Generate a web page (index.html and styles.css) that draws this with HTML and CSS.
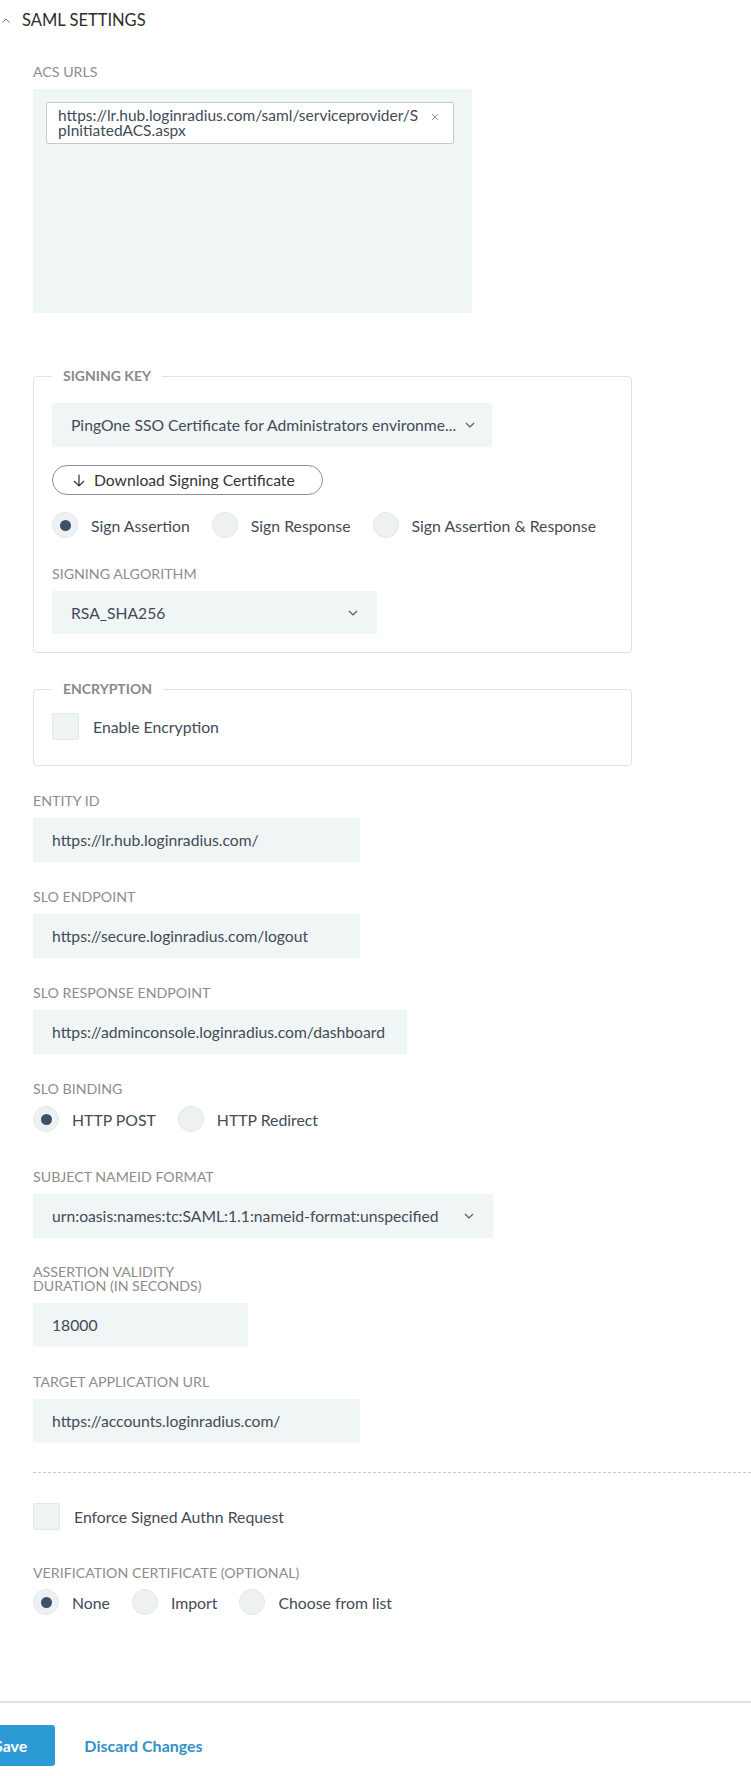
FILE: index.html
```html
<!DOCTYPE html>
<html lang="en">
<head>
    <meta charset="UTF-8">
    <meta name="viewport" content="width=device-width, initial-scale=1.0">
    <title>SAML Settings</title>
    <link rel="stylesheet" href="styles.css">
</head>
<body>

<div class="saml-panel">
    <div class="panel-head">
        <svg class="caret" width="8" height="5" viewBox="0 0 8 5"><path d="M0.5 4.5 L4 1 L7.5 4.5" fill="none" stroke="#777" stroke-width="1"/></svg>
        <span>SAML SETTINGS</span>
    </div>

    <div class="panel-body">
        <div class="field first">
            <label class="field-label">ACS URLS</label>
            <div class="tag-box">
                <div class="tag">
                    <span class="tag-text">https://lr.hub.loginradius.com/saml/serviceprovider/S<br>pInitiatedACS.aspx</span>
                    <svg class="tag-close" width="8" height="8" viewBox="0 0 8 8"><path d="M1 1 L7 7 M7 1 L1 7" stroke="#9a9a9a" stroke-width="1"/></svg>
                </div>
            </div>
        </div>

        <fieldset class="group signing">
            <legend>SIGNING KEY</legend>
            <div class="select w-key">
                <span>PingOne SSO Certificate for Administrators environme...</span>
                <svg width="10" height="6" viewBox="0 0 10 6"><path d="M1 1 L5 5 L9 1" fill="none" stroke="#555" stroke-width="1.1"/></svg>
            </div>
            <button class="btn-outline">
                <svg width="12" height="13" viewBox="0 0 12 13"><path d="M6 0.5 V12 M1 7 L6 12 L11 7" fill="none" stroke="#333" stroke-width="1.2"/></svg>
                Download Signing Certificate
            </button>
            <div class="radio-row">
                <label class="radio checked"><span class="radio-dot"></span>Sign Assertion</label>
                <label class="radio"><span class="radio-dot"></span>Sign Response</label>
                <label class="radio"><span class="radio-dot"></span>Sign Assertion &amp; Response</label>
            </div>
            <label class="field-label algo-label">SIGNING ALGORITHM</label>
            <div class="select w-algo">
                <span>RSA_SHA256</span>
                <svg width="10" height="6" viewBox="0 0 10 6"><path d="M1 1 L5 5 L9 1" fill="none" stroke="#555" stroke-width="1.1"/></svg>
            </div>
        </fieldset>

        <fieldset class="group encryption">
            <legend>ENCRYPTION</legend>
            <label class="check"><span class="check-box"></span>Enable Encryption</label>
        </fieldset>

        <div class="field">
            <label class="field-label">ENTITY ID</label>
            <div class="text-input w-md">https://lr.hub.loginradius.com/</div>
        </div>

        <div class="field">
            <label class="field-label">SLO ENDPOINT</label>
            <div class="text-input w-md">https://secure.loginradius.com/logout</div>
        </div>

        <div class="field">
            <label class="field-label">SLO RESPONSE ENDPOINT</label>
            <div class="text-input w-lg">https://adminconsole.loginradius.com/dashboard</div>
        </div>

        <div class="field">
            <label class="field-label">SLO BINDING</label>
            <div class="radio-row">
                <label class="radio checked"><span class="radio-dot"></span>HTTP POST</label>
                <label class="radio"><span class="radio-dot"></span>HTTP Redirect</label>
            </div>
        </div>

        <div class="field gap-lg">
            <label class="field-label">SUBJECT NAMEID FORMAT</label>
            <div class="select w-xl">
                <span>urn:oasis:names:tc:SAML:1.1:nameid-format:unspecified</span>
                <svg width="10" height="6" viewBox="0 0 10 6"><path d="M1 1 L5 5 L9 1" fill="none" stroke="#555" stroke-width="1.1"/></svg>
            </div>
        </div>

        <div class="field">
            <label class="field-label two-line">ASSERTION VALIDITY<br>DURATION (IN SECONDS)</label>
            <div class="text-input w-sm">18000</div>
        </div>

        <div class="field">
            <label class="field-label">TARGET APPLICATION URL</label>
            <div class="text-input w-md">https://accounts.loginradius.com/</div>
        </div>

        <div class="divider"></div>

        <label class="check enforce"><span class="check-box"></span>Enforce Signed Authn Request</label>

        <div class="field verify">
            <label class="field-label">VERIFICATION CERTIFICATE (OPTIONAL)</label>
            <div class="radio-row">
                <label class="radio checked"><span class="radio-dot"></span>None</label>
                <label class="radio"><span class="radio-dot"></span>Import</label>
                <label class="radio"><span class="radio-dot"></span>Choose from list</label>
            </div>
        </div>
    </div>

    <div class="panel-foot">
        <button class="btn-save">Save</button>
        <a href="#" class="btn-link">Discard Changes</a>
    </div>
</div>

</body>
</html>
```

FILE: styles.css
```css
body {
    margin: 0;
    font-family: Lato, "Liberation Sans", Arial, sans-serif;
    color: #434b57;
    background-color: #fff;
}
.saml-panel {
    width: 751px;
}
.panel-head {
    display: flex;
    align-items: center;
    height: 24px;
    padding-top: 8px;
    font-size: 16.5px;
    color: #2d2d2d;
}
.panel-head .caret {
    margin-left: 2px;
    margin-right: 12px;
}
.panel-body {
    padding-left: 33px;
}
.field {
    margin-top: 27px;
}
.field.first {
    margin-top: 32px;
}
.field.gap-lg {
    margin-top: 37px;
}
.field-label {
    display: block;
    font-size: 14.2px;
    line-height: 16px;
    color: #8d8d8d;
    margin-bottom: 9px;
}
.field-label.two-line {
    line-height: 14px;
    margin-bottom: 10px;
}

/* ACS url tags */
.tag-box {
    width: 439px;
    height: 224px;
    box-sizing: border-box;
    padding: 13px;
    background-color: #f0f5f5;
}
.tag {
    display: flex;
    align-items: flex-start;
    justify-content: space-between;
    width: 408px;
    box-sizing: border-box;
    padding: 5px 14px 5px 11px;
    background: #fff;
    border: 1px solid #c9c9c9;
    border-radius: 2px;
    font-size: 15.5px;
    line-height: 15px;
}
.tag-close {
    margin-top: 5px;
}

/* grouped boxes */
.group {
    margin: 55px 0 0;
    width: 599px;
    box-sizing: border-box;
    border: 1px solid #dfe3e4;
    border-radius: 4px;
    padding: 19px 18px 18px;
}
.group legend {
    padding: 0 11px;
    font-size: 14px;
    line-height: 16px;
    font-weight: 700;
    color: #8a8a8a;
}
.group.encryption {
    margin-top: 28px;
    padding: 16px 18px 25px;
}

.select, .text-input {
    display: flex;
    align-items: center;
    height: 44px;
    box-sizing: border-box;
    padding: 0 19px;
    background-color: #f0f5f5;
    font-size: 15.7px;
}
.select {
    justify-content: space-between;
}
.select svg {
    flex-shrink: 0;
}
.w-key { width: 440px; padding-right: 17px; }
.w-algo { width: 325px; height: 43px; }
.w-xl { width: 460px; }
.w-sm { width: 215px; }
.w-md { width: 327px; }
.w-lg { width: 374px; }

.btn-outline {
    display: flex;
    align-items: center;
    gap: 9px;
    margin-top: 18px;
    width: 271px;
    height: 30px;
    padding: 0 0 0 20px;
    background: #fff;
    border: 1px solid #8f8f8f;
    border-radius: 15px;
    font-family: inherit;
    font-size: 15.7px;
    color: #333;
}

.radio-row {
    display: flex;
    align-items: center;
    gap: 22px;
}
.group .radio-row {
    margin-top: 17px;
}
.radio {
    display: flex;
    align-items: center;
    font-size: 15.8px;
}
.radio-dot {
    display: flex;
    align-items: center;
    justify-content: center;
    width: 26px;
    height: 26px;
    box-sizing: border-box;
    margin-right: 13px;
    border-radius: 50%;
    background-color: #edf1f2;
    border: 1px solid #e3e7e8;
}
.radio.checked .radio-dot::after {
    content: "";
    width: 11px;
    height: 11px;
    border-radius: 50%;
    background-color: #3e4f68;
}
.algo-label {
    margin-top: 28px;
}

.check {
    display: flex;
    align-items: center;
    font-size: 15.8px;
}
.check-box {
    width: 27px;
    height: 27px;
    box-sizing: border-box;
    margin-right: 14px;
    border-radius: 2px;
    background-color: #eef3f4;
    border: 1px solid #e3e8e9;
}

.divider {
    margin-top: 29px;
    border-top: 1px dashed #c8c8c8;
}
.check.enforce {
    margin-top: 30px;
}
.field.verify {
    margin-top: 35px;
}
.field.verify .field-label {
    margin-bottom: 8px;
}

/* footer buttons */
.panel-foot {
    display: flex;
    align-items: center;
    margin-top: 86px;
    padding-top: 22px;
    border-top: 2px solid #e2e2e2;
}
.btn-save {
    height: 41px;
    margin-left: -34px;
    padding: 0 28px;
    background-color: #2b9ad5;
    border: none;
    border-radius: 3px;
    color: #fff;
    font-family: inherit;
    font-size: 16px;
    font-weight: 700;
}
.btn-link {
    margin-left: 29px;
    color: #3590c9;
    font-size: 16px;
    font-weight: 700;
    text-decoration: none;
}
```
